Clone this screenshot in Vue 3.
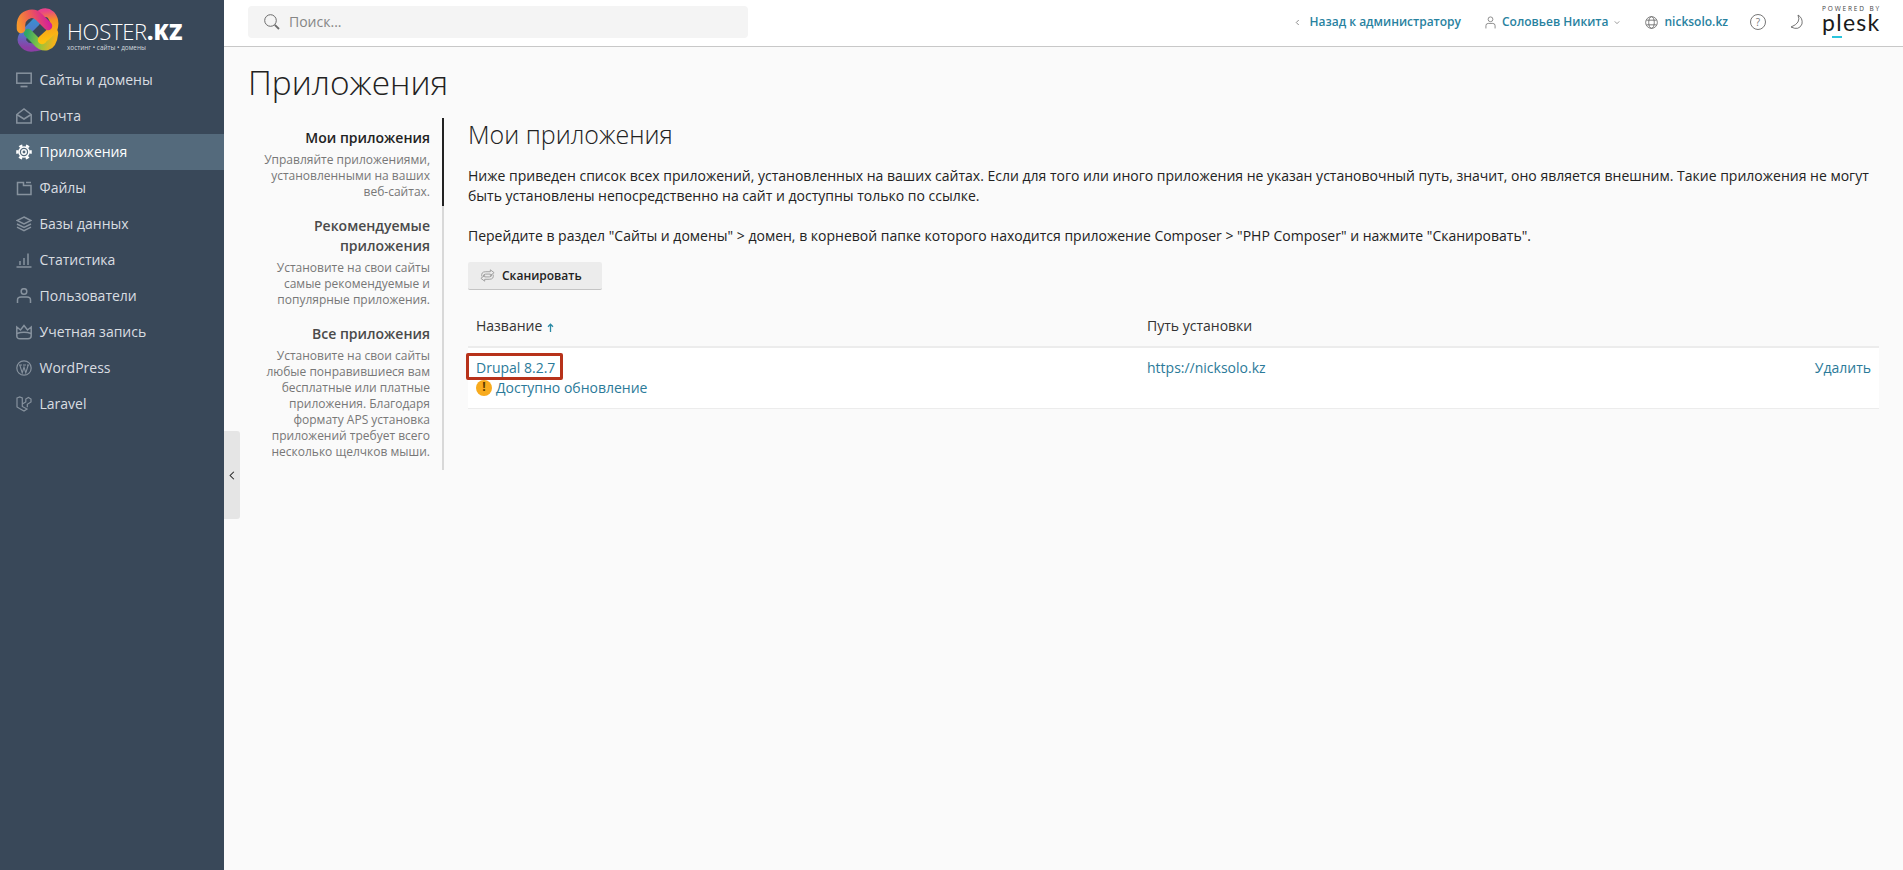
<script setup>
const nav = [
  { label: 'Сайты и домены', icon: 'monitor' },
  { label: 'Почта', icon: 'mail' },
  { label: 'Приложения', icon: 'gear', active: true },
  { label: 'Файлы', icon: 'folder' },
  { label: 'Базы данных', icon: 'layers' },
  { label: 'Статистика', icon: 'stats' },
  { label: 'Пользователи', icon: 'user' },
  { label: 'Учетная запись', icon: 'crown' },
  { label: 'WordPress', icon: 'wp' },
  { label: 'Laravel', icon: 'laravel' },
]
const side = [
  { title: 'Мои приложения', text: 'Управляйте приложениями, установленными на ваших веб-сайтах.', active: true },
  { title: 'Рекомендуемые приложения', text: 'Установите на свои сайты самые рекомендуемые и популярные приложения.' },
  { title: 'Все приложения', text: 'Установите на свои сайты любые понравившиеся вам бесплатные или платные приложения. Благодаря формату APS установка приложений требует всего несколько щелчков мыши.' },
]
</script>

<template>
  <div class="page">
    <aside class="sidebar">
      <div class="brand">
        <svg class="brand-mark" viewBox="0 0 44 44" fill="none" stroke-width="8.5" stroke-linecap="round">
          <defs>
            <linearGradient id="g1" gradientUnits="userSpaceOnUse" x1="5" y1="24" x2="34" y2="14"><stop offset="0" stop-color="#f79a2a"/><stop offset="0.45" stop-color="#ef5f52"/><stop offset="1" stop-color="#d3209a"/></linearGradient>
            <linearGradient id="g2" gradientUnits="userSpaceOnUse" x1="22" y1="4" x2="26" y2="34"><stop offset="0" stop-color="#e8438a"/><stop offset="0.35" stop-color="#f79420"/><stop offset="1" stop-color="#fcc10f"/></linearGradient>
            <linearGradient id="g3" gradientUnits="userSpaceOnUse" x1="12" y1="24" x2="40" y2="30"><stop offset="0" stop-color="#2fa56a"/><stop offset="0.5" stop-color="#8cc63f"/><stop offset="1" stop-color="#f5b21a"/></linearGradient>
            <linearGradient id="g4" gradientUnits="userSpaceOnUse" x1="22" y1="12" x2="20" y2="40"><stop offset="0" stop-color="#3a8fd0"/><stop offset="0.55" stop-color="#5a6fc4"/><stop offset="1" stop-color="#8c3fa5"/></linearGradient>
          </defs>
          <path d="M21 14L10 25Q5 31 8 35Q12 41 20 39L25 38" stroke="url(#g4)"/>
          <path d="M13 25L22 34Q26 39 32 38Q38 36 39 25" stroke="url(#g3)"/>
          <path d="M23 8Q30 2 36 7Q41 13 38 22L27 32" stroke="url(#g2)"/>
          <path d="M6 21Q5 8 15 6Q20 5 24 9L33 18" stroke="url(#g1)"/>
        </svg>
        <div class="brand-text">
          <div class="brand-name">HOSTER<b>.KZ</b></div>
          <div class="brand-sub">хостинг • сайты • домены</div>
        </div>
      </div>
      <nav class="nav">
        <a v-for="item in nav" :key="item.label" class="nav-item" :class="{ active: item.active }">
          <svg class="nav-icon" viewBox="0 0 16 16" fill="none" stroke="currentColor" stroke-width="1.5">
            <template v-if="item.icon === 'monitor'">
              <rect x="0.8" y="1.2" width="14.4" height="10"/><path d="M4.5 14.5h7" stroke-width="1.7"/>
            </template>
            <template v-else-if="item.icon === 'mail'">
              <path d="M0.8 6.5L8 1L15.2 6.5V15H0.8Z"/><path d="M0.8 6.5L8 11L15.2 6.5"/>
            </template>
            <template v-else-if="item.icon === 'gear'">
              <circle cx="8" cy="8" r="6.6" stroke-width="2.4" stroke-dasharray="3.4 3.51" transform="rotate(-15 8 8)"/>
              <circle cx="8" cy="8" r="5" stroke-width="1.6"/>
              <circle cx="8" cy="8" r="2.2" stroke-width="1.5"/>
            </template>
            <template v-else-if="item.icon === 'folder'">
              <path d="M1.5 2.5V14.5H15V5.5H7.5V2.5Z"/><path d="M10 2.5H15"/>
            </template>
            <template v-else-if="item.icon === 'layers'">
              <path d="M8 1L15 4.5L8 8L1 4.5Z"/><path d="M1 8L8 11.5L15 8"/><path d="M1 11.2L8 14.7L15 11.2"/>
            </template>
            <template v-else-if="item.icon === 'stats'">
              <path d="M0.5 15H15.5"/><path d="M4 13V9M8 13V6M12 13V1.5"/>
            </template>
            <template v-else-if="item.icon === 'user'">
              <circle cx="8" cy="3.5" r="2.8"/><path d="M1.5 15V12Q1.5 9 5 9H11Q14.5 9 14.5 12V15"/>
            </template>
            <template v-else-if="item.icon === 'crown'">
              <path d="M0.8 3L4.5 6L8 1.5L11.5 6L15.2 3V12Q15.2 14.7 12 14.7H4Q0.8 14.7 0.8 12Z"/><path d="M0.8 9.5Q8 7 15.2 9.5"/>
            </template>
            <template v-else-if="item.icon === 'wp'">
              <circle cx="8" cy="8" r="7.2" stroke-width="1.2"/><path d="M3.8 5L6.2 12.8L8 7L9.8 12.8L12.2 5M3 5H6M7 5H10M11 5H13.2" stroke-width="1.1"/>
            </template>
            <template v-else>
              <path d="M1 2L3.7 1L6.3 2V10.5L11 13L8 15L3.5 12.5L1 11Z" stroke-width="1.2"/><path d="M6.3 8L9.8 6V3L12.4 1.5L15 3V6L11.3 8.3V11.2" stroke-width="1.2"/>
            </template>
          </svg>
          <span>{{ item.label }}</span>
        </a>
      </nav>
    </aside>
    <button class="collapse" aria-label="Свернуть">
      <svg viewBox="0 0 8 12" width="6" height="9" fill="none" stroke="#222" stroke-width="1.4"><path d="M6.5 1L1.5 6L6.5 11"/></svg>
    </button>

    <div class="body">
      <header class="top">
        <div class="search">
          <svg viewBox="0 0 16 16" width="16" height="16" fill="none" stroke="#6b6b6b" stroke-width="1"><circle cx="6.5" cy="6.5" r="5.8"/><path d="M10.8 10.8L15 15" stroke-width="1.8"/></svg>
          <span>Поиск...</span>
        </div>
        <div class="top-links">
          <a class="tl back">
            <svg viewBox="0 0 6 8" width="5" height="7" fill="none" stroke="#777" stroke-width="1"><path d="M4.5 1L1.5 4L4.5 7"/></svg>
            <span>Назад к администратору</span>
          </a>
          <a class="tl user">
            <svg viewBox="0 0 12 14" width="11" height="13" fill="none" stroke="#777" stroke-width="0.9"><circle cx="6" cy="3.5" r="2.6"/><path d="M1 13.5V10.5Q1 8 3.5 8H8.5Q11 8 11 10.5V13.5"/></svg>
            <span>Соловьев Никита</span>
            <svg viewBox="0 0 8 6" width="6" height="5" fill="none" stroke="#777" stroke-width="1"><path d="M1 1.5L4 4.5L7 1.5"/></svg>
          </a>
          <a class="tl domain">
            <svg viewBox="0 0 14 14" width="13" height="13" fill="none" stroke="#666" stroke-width="0.9"><circle cx="7" cy="7" r="6.3"/><ellipse cx="7" cy="7" rx="3" ry="6.3"/><path d="M1.5 4.5H12.5M1.5 9.5H12.5"/></svg>
            <span>nicksolo.kz</span>
          </a>
          <a class="help">?</a>
          <svg class="moon" viewBox="0 0 14 16" width="14" height="16" fill="none" stroke="#666" stroke-width="0.9"><path d="M9 1Q12.5 9 2 13Q10 17 13 10Q14 4 9 1Z"/></svg>
          <div class="plesk">
            <div class="plesk-by">POWERED BY</div>
            <div class="plesk-name">plesk</div>
          </div>
        </div>
      </header>

      <main class="main">
        <h1 class="title">Приложения</h1>
        <div class="columns">
          <ul class="side">
            <li v-for="s in side" :key="s.title" class="side-item" :class="{ active: s.active }">
              <div class="side-title">{{ s.title }}</div>
              <div class="side-text">{{ s.text }}</div>
            </li>
          </ul>
          <section class="content">
            <h2 class="subtitle">Мои приложения</h2>
            <p class="para">Ниже приведен список всех приложений, установленных на ваших сайтах. Если для того или иного приложения не указан установочный путь, значит, оно является внешним. Такие приложения не могут быть установлены непосредственно на сайт и доступны только по ссылке.</p>
            <p class="para">Перейдите в раздел "Сайты и домены" &gt; домен, в корневой папке которого находится приложение Composer &gt; "PHP Composer" и нажмите "Сканировать".</p>
            <button class="scan">
              <svg viewBox="0 0 18 18" width="17" height="17" fill="none" stroke="#999" stroke-width="0.95" stroke-linejoin="round"><path d="M3 10Q2 5 7 5H12V3L16 6L12 9V7.5H7Q4.5 7.5 4.5 10"/><path d="M15 8Q16 13 11 13H6V15L2 12L6 9V10.5H11Q13.5 10.5 13.5 8"/></svg>
              <span>Сканировать</span>
            </button>
            <div class="table">
              <div class="row head">
                <div class="c1">Название <svg class="arrow" viewBox="0 0 7 9" width="7" height="9" fill="none" stroke="#2b8aa5" stroke-width="1.3"><path d="M3.5 9V1.5M1 3.8L3.5 1.2L6 3.8"/></svg></div>
                <div class="c2">Путь установки</div>
                <div class="c3"></div>
              </div>
              <div class="row item">
                <div class="c1">
                  <a class="link drupal">Drupal 8.2.7</a>
                  <div class="update">
                    <span class="warn">!</span>
                    <a class="link">Доступно обновление</a>
                  </div>
                </div>
                <div class="c2"><a class="link">https://nicksolo.kz</a></div>
                <div class="c3"><a class="link">Удалить</a></div>
              </div>
            </div>
          </section>
        </div>
      </main>
    </div>
  </div>
</template>

<style>
html, body { margin: 0; padding: 0; background: #fff; }
</style>

<style scoped>
.page {
  display: flex;
  position: relative;
  min-height: 870px;
  font-family: "Open Sans", "Noto Sans", sans-serif;
  font-size: 14px;
  line-height: 20px;
  color: #222;
}
.sidebar { width: 224px; flex: none; background: #394859; color: #dfe3e7; }
.brand { height: 62px; display: flex; align-items: flex-start; box-sizing: border-box; padding: 8px 0 0 15px; }
.brand-mark { width: 44px; height: 44px; flex: none; }
.brand-text { margin-left: 8px; padding-top: 11px; color: #fff; }
.brand-name { font-family: "Open Sans", sans-serif; font-size: 22px; line-height: 24px; font-weight: 300; letter-spacing: -0.25px; white-space: nowrap; }
.brand-name b { font-weight: 800; letter-spacing: 0.3px; }
.brand-sub { font-size: 6.4px; line-height: 9px; color: #d5dadf; white-space: nowrap; }
.nav { display: flex; flex-direction: column; }
.nav-item { height: 36px; display: flex; align-items: center; padding-left: 16px; color: #d9dde1; }
.nav-item.active { background: #546a7c; color: #fff; }
.nav-icon { width: 16px; height: 16px; margin-right: 7.5px; color: #87929e; flex: none; }
.nav-item.active .nav-icon { color: #fff; }

.collapse {
  position: absolute; left: 224px; top: 431px; width: 16px; height: 88px;
  background: #e5e5e5; border: 0; border-radius: 0 3px 3px 0; padding: 0;
  display: flex; align-items: center; justify-content: center;
}

.body { flex: 1; min-width: 0; display: flex; flex-direction: column; background: #fff; }
.top {
  height: 47px; flex: none; box-sizing: border-box; background: #fff;
  border-bottom: 1px solid #c8c8c8; box-shadow: 0 1px 1px rgba(0,0,0,.06);
  display: flex; align-items: center; justify-content: space-between; padding: 0 24px 2px 24px;
}
.search {
  width: 500px; height: 32px; box-sizing: border-box; background: #f4f4f4; border-radius: 4px;
  display: flex; align-items: center; gap: 9px; padding-left: 16px; color: #868686;
}
.top-links { display: flex; align-items: center; font-size: 12px; font-weight: 600; color: #28829f; }
.tl { display: flex; align-items: center; gap: 6px; }
.back { margin-right: 24px; gap: 9px; }
.user { margin-right: 25px; }
.domain { margin-right: 22px; }
.help {
  width: 14px; height: 14px; border: 1px solid #777; border-radius: 50%; color: #777;
  font-size: 10px; line-height: 14px; text-align: center; font-weight: 400; margin-right: 23px;
}
.moon { margin-right: 19px; }
.plesk { display: flex; flex-direction: column; align-items: flex-start; width: 57px; height: 27px; margin-top: -7px; color: #1a1a1a; }
.plesk-by { font-size: 6.5px; line-height: 8px; letter-spacing: 1.85px; font-weight: 400; white-space: nowrap; color: #444; }
.plesk-name { font-family: Lato, sans-serif; font-size: 23px; line-height: 19px; font-weight: 400; letter-spacing: 1.3px; position: relative; }
.plesk-name::after { content: ""; position: absolute; left: 10px; bottom: -6px; width: 10px; height: 2px; background: #2bc4dc; }

.main { flex: 1; background: #fafafa; padding: 13px 24px 0 24px; }
.title { margin: 0; font-size: 33.4px; line-height: 44px; font-weight: 300; color: #222; }
.columns { display: flex; margin-top: 14px; }
.side { list-style: none; margin: 0; padding: 0 0 4px; width: 194px; flex: none; border-right: 2px solid #d8d8d8; box-sizing: content-box; align-self: flex-start; }
.side-item { padding: 10px 12px 6px 12px; text-align: right; margin-right: -2px; border-right: 2px solid transparent; }
.side-item.active { border-right-color: #222; }
.side-title { font-size: 14px; line-height: 20px; font-weight: 600; color: #4a4a4a; }
.side-item.active .side-title { color: #222; }
.side-text { font-size: 12px; line-height: 16px; color: #777; margin-top: 4px; }
.content { flex: 1; min-width: 0; padding: 2px 0 0 24px; }
.subtitle { margin: 0; font-size: 25px; line-height: 28px; font-weight: 300; color: #222; }
.para { margin: 18px 0 20px; color: #222; }
.para + .para { margin-top: 0; margin-bottom: 16px; }
.scan {
  display: flex; align-items: center; gap: 6px; width: 134px; height: 28px; box-sizing: border-box;
  padding: 0 0 0 11px; background: #ececec; border: 0; border-bottom: 1px solid #c4c4c4; border-radius: 2px;
  font: 600 12px "Open Sans", sans-serif; color: #222;
}
.table { margin-top: 15px; }
.row { display: grid; grid-template-columns: 671px 1fr 120px; }
.row > div { padding: 0 8px; }
.head { height: 43px; align-items: center; box-sizing: border-box; border-bottom: 2px solid #ececec; color: #333; }
.arrow { margin-left: 1px; vertical-align: -1px; }
.item { background: #fff; border-bottom: 1px solid #ececec; padding: 10px 0; }
.c3 { text-align: right; }
.link { color: #2b7a99; }
.drupal { display: inline-block; position: relative; }
.drupal::after { content: ""; position: absolute; left: -10px; right: -8px; top: -5px; bottom: -2px; border: 3px solid #b7321a; border-radius: 2px; box-sizing: border-box; pointer-events: none; }
.update { display: flex; align-items: center; gap: 4px; }
.warn { width: 16px; height: 16px; border-radius: 50%; background: #f8ab1e; color: #5a3b00; font-size: 12px; line-height: 14px; font-weight: 700; text-align: center; }
</style>
